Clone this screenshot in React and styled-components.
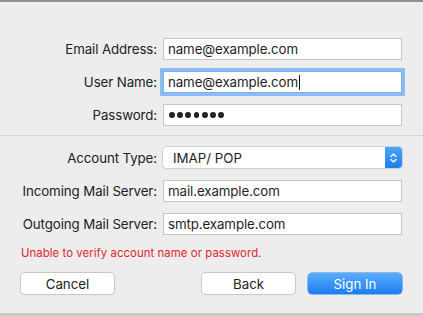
import React from "react";
import styled, { createGlobalStyle } from "styled-components";

const Global = createGlobalStyle`
  html, body { margin: 0; padding: 0; background: #ededed; }
  body { font-family: Inter, "Liberation Sans", Arial, sans-serif; }
`;

const Sheet = styled.div`
  width: 423px;
  height: 316px;
  box-sizing: border-box;
  background: #ededed;
  border-top: 2px solid #8f8f8f;
  border-bottom: 3px solid #c9c9c9;
  display: flex;
  flex-direction: column;
  color: #1f1f1f;
`;

const Section = styled.div`
  display: grid;
  grid-template-columns: 136px 239px;
  column-gap: 6px;
  row-gap: ${(p) => p.$gap}px;
  align-items: center;
  padding: ${(p) => p.$pad};
`;

const Label = styled.label`
  text-align: right;
  font-size: 13.3px;
  letter-spacing: -0.1px;
  color: #222;
  white-space: nowrap;
`;

const Field = styled.div`
  box-sizing: border-box;
  height: 22px;
  background: #fff;
  border: 1px solid #c6c6c6;
  display: flex;
  align-items: center;
  padding-left: 4px;
  font-size: 13.3px;
  letter-spacing: -0.1px;
  color: #1e1e1e;
  ${(p) =>
    p.$focus &&
    `
    box-shadow: 0 0 0 3px #8ebdf3;
    border-color: #7fb0ea;
  `}
`;

const Caret = styled.span`
  display: inline-block;
  width: 1px;
  height: 15px;
  background: #111;
  margin-left: 1px;
`;

const Dots = styled.span`
  display: flex;
  gap: 2.4px;
  padding-left: 1px;
`;

const Dot = styled.span`
  width: 5.8px;
  height: 5.8px;
  border-radius: 50%;
  background: #222;
`;

const Divider = styled.div`
  height: 1px;
  background: #d6d6d6;
  margin-top: 9px;
`;

const Select = styled.div`
  box-sizing: border-box;
  height: 21px;
  background: #fff;
  border-radius: 4px;
  box-shadow: 0 0 0 1px #cfcfcf, 0 1px 1px rgba(0, 0, 0, 0.12);
  display: flex;
  align-items: center;
  font-size: 13.3px;
  color: #1e1e1e;
  overflow: hidden;
`;

const SelectText = styled.span`
  flex: 1;
  padding-left: 10px;
`;

const Stepper = styled.span`
  width: 17px;
  height: 100%;
  background: linear-gradient(#4ea4fb, #1c7ff0);
  display: flex;
  align-items: center;
  justify-content: center;
`;

const Error = styled.div`
  padding: 11px 21px 0;
  font-size: 11.4px;
  color: #e1262b;
  letter-spacing: 0.05px;
`;

const Buttons = styled.div`
  display: flex;
  align-items: center;
  gap: 13px;
  padding: 13px 21px 0;
`;

const Spacer = styled.div`
  flex: 1;
`;

const Button = styled.button`
  box-sizing: border-box;
  width: ${(p) => p.$w}px;
  height: 21px;
  border-radius: 4px;
  font-family: inherit;
  font-size: 13.3px;
  padding: 0;
  ${(p) =>
    p.$primary
      ? `
    border: none;
    color: #fff;
    background: linear-gradient(#5cacfb, #1b7ef1);
    box-shadow: 0 0 0 0.5px #2a84ea;
  `
      : `
    border: none;
    color: #222;
    background: #fff;
    box-shadow: 0 0 0 1px #c8c8c8, 0 1px 1px rgba(0,0,0,0.15);
  `}
`;

export default function App() {
  return (
    <>
      <Global />
      <Sheet>
        <Section $gap={11} $pad="36px 21px 0">
          <Label>Email Address:</Label>
          <Field>name@example.com</Field>
          <Label>User Name:</Label>
          <Field $focus>
            name@example.com
            <Caret />
          </Field>
          <Label>Password:</Label>
          <Field>
            <Dots>
              {Array.from({ length: 7 }, (_, i) => (
                <Dot key={i} />
              ))}
            </Dots>
          </Field>
        </Section>
        <Divider />
        <Section $gap={11.5} $pad="11px 21px 0">
          <Label>Account Type:</Label>
          <Select>
            <SelectText>IMAP/ POP</SelectText>
            <Stepper>
              <svg width="7" height="12" viewBox="0 0 7 12" fill="none">
                <path
                  d="M1 4.5 L3.5 2 L6 4.5 M1 7.5 L3.5 10 L6 7.5"
                  stroke="#fff"
                  strokeWidth="1.3"
                  strokeLinecap="round"
                  strokeLinejoin="round"
                />
              </svg>
            </Stepper>
          </Select>
          <Label>Incoming Mail Server:</Label>
          <Field>mail.example.com</Field>
          <Label>Outgoing Mail Server:</Label>
          <Field>smtp.example.com</Field>
        </Section>
        <Error>Unable to verify account name or password.</Error>
        <Buttons>
          <Button $w={93}>Cancel</Button>
          <Spacer />
          <Button $w={93}>Back</Button>
          <Button $w={94} $primary>
            Sign In
          </Button>
        </Buttons>
      </Sheet>
    </>
  );
}
